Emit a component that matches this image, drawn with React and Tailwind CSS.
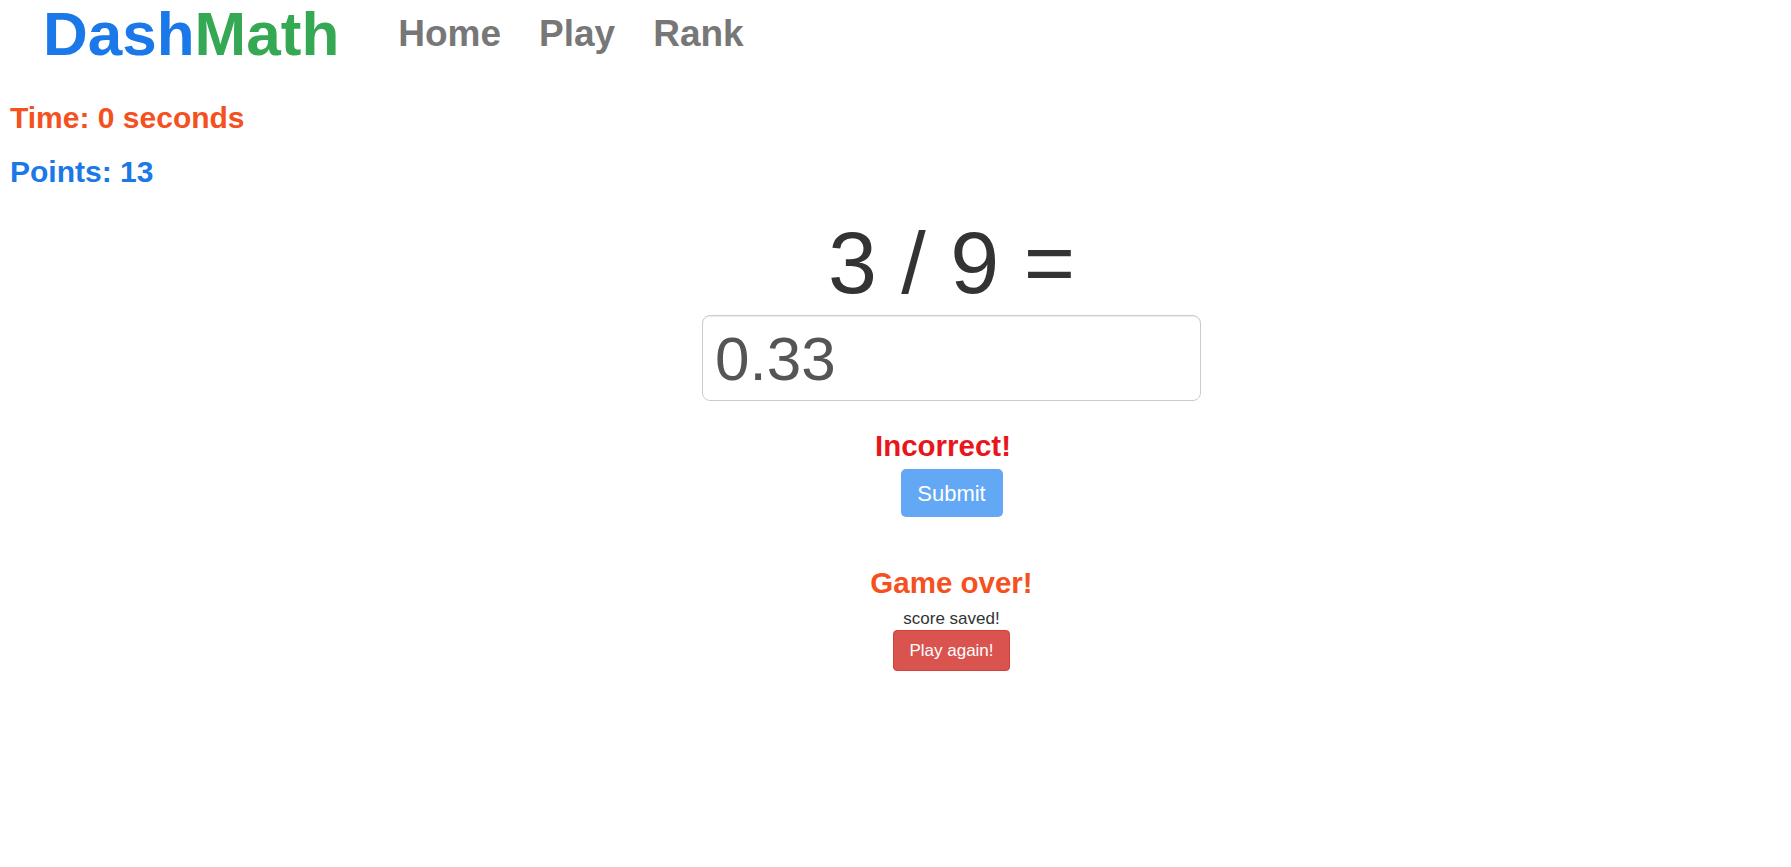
import { useState } from 'react';

const font = { fontFamily: '"Liberation Sans", Arial, sans-serif' };

const Header = () => (
    <header className="flex items-start pl-[43px]">
        <h1 className="mt-[2px] text-[62px] leading-[63px] font-bold">
            <span className="text-[#1a78e8]">Dash</span>
            <span className="text-[#34a853]">Math</span>
        </h1>
        <nav className="ml-[59px] mt-[15px] flex gap-[38px] text-[37px] leading-[37px] font-bold text-[#777]">
            <a href="#">Home</a>
            <a href="#">Play</a>
            <a href="#">Rank</a>
        </nav>
    </header>
);

const App = () => {
    const [answer, setAnswer] = useState('0.33');

    return (
        <div className="min-h-screen bg-white" style={font}>
            <Header />
            <div className="pl-[10px]">
                <p className="mt-[38px] text-[30px] leading-[30px] font-bold text-[#f4511e]">Time: 0 seconds</p>
                <p className="mt-[24px] text-[30px] leading-[30px] font-bold text-[#1a78e8]">Points: 13</p>
            </div>
            <main className="flex flex-col items-center pl-[112px]">
                <div className="mt-[32px] text-[88px] leading-[88px] text-[#333]">3 / 9 =</div>
                <input
                    value={answer}
                    onChange={(e) => setAnswer(e.target.value)}
                    className="mt-[8px] w-[499px] h-[86px] px-3 rounded-lg border border-[#ccc] text-[62px] text-[#555] shadow-[inset_0_1px_1px_rgba(0,0,0,0.075)] outline-none"
                />
                <p className="mt-[31px] mr-[17px] text-[29.5px] leading-[28px] font-bold text-[#e8161b]">Incorrect!</p>
                <button className="mt-[9px] w-[102px] h-[48px] rounded-[5px] bg-[#62a8f5] text-[22px] text-white">
                    Submit
                </button>
                <p className="mt-[52px] text-[29.5px] leading-[28px] font-bold text-[#f4511e]">Game over!</p>
                <p className="mt-[13px] text-[17px] leading-[17px] text-[#333]">score saved!</p>
                <button className="mt-[3px] w-[117px] h-[41px] rounded-[4px] bg-[#d9534f] border border-[#d43f3a] text-[17px] text-white">
                    Play again!
                </button>
            </main>
        </div>
    );
};

export default App;
